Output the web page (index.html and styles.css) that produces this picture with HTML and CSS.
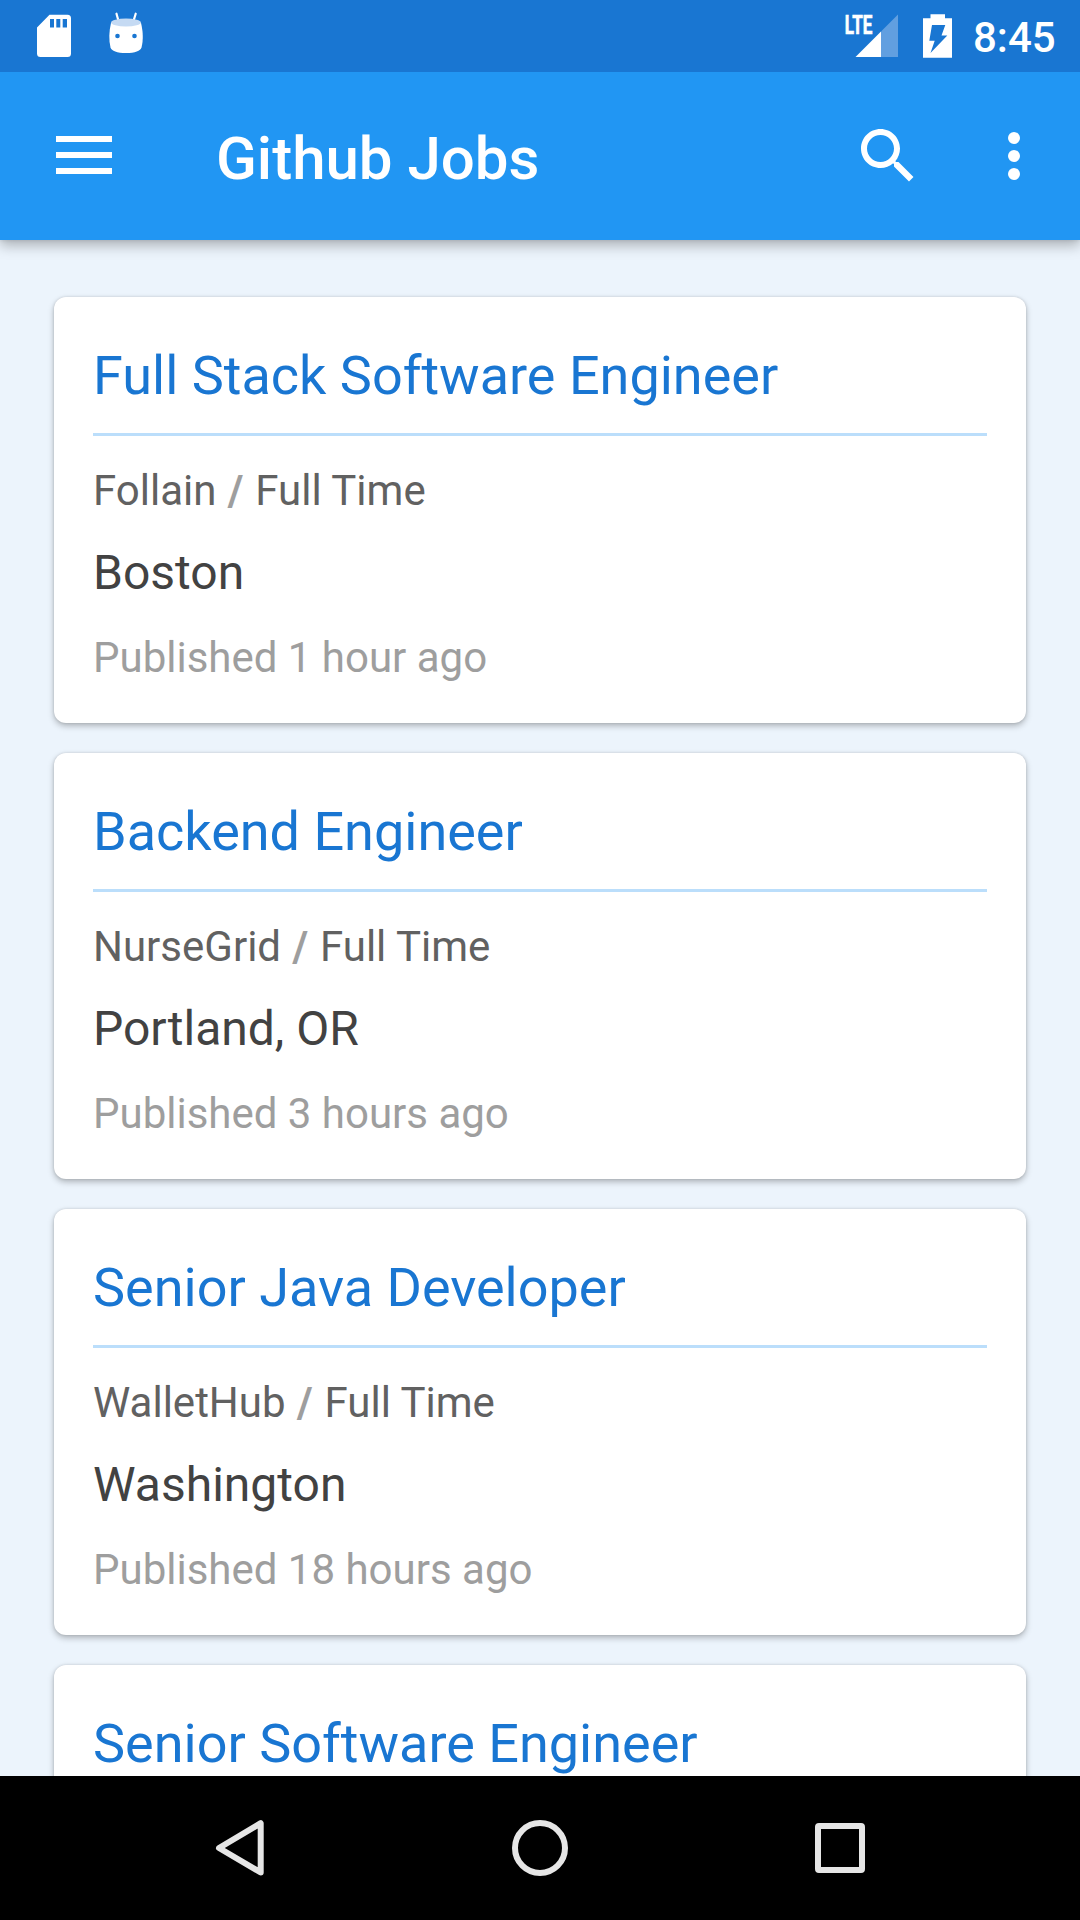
FILE: index.html
```html
<!DOCTYPE html>
<html lang="en">
<head>
<meta charset="utf-8">
<title>Github Jobs</title>
<link rel="stylesheet" href="styles.css">
</head>
<body>
<div class="screen">
  <div class="status-bar">
    <svg class="status-left" width="160" height="72" viewBox="0 0 160 72" aria-hidden="true">
      <path fill="#fff" fill-rule="evenodd" d="M49.500 14.700H67.500Q71 14.700 71 18.200V53.500Q71 57 67.500 57H40.500Q37 57 37 53.500V27.500ZM50 19V27.500H54V19ZM56.300 19V27.500H60.300V19ZM62.700 19V27.500H67V19Z"/>
      <path fill="none" stroke="#fff" stroke-width="2.200" stroke-linecap="round" d="M116.500 13.700L118.500 21M135.700 13.700L133.500 21"/>
      <path fill="#fff" d="M111 23C109 31 108.700 40 110.500 47.500C111.500 51 117 53 126 53S140.500 51 141.500 47.500C143.500 40 143 31 141 23Z"/>
      <ellipse cx="126" cy="22.500" rx="15" ry="4" fill="#c5daf3"/>
      <circle cx="117.500" cy="36" r="2.300" fill="#1976d2"/>
      <circle cx="134.500" cy="36" r="2.300" fill="#1976d2"/>
    </svg>
    <div class="status-right">
      <svg width="116" height="72" viewBox="840 0 116 72" aria-hidden="true">
        <path fill="#619fe0" d="M898 14.500V57H881V31.500Z"/>
        <path fill="#fff" d="M855.500 57L881 31.500V57Z"/>
        <text class="lte" x="844.800" y="33.500" textLength="27.500" lengthAdjust="spacingAndGlyphs">LTE</text>
        <path fill="#fff" fill-rule="evenodd" d="M930.500 14.300H945V18.300H952V57.700H923V18.300H930.500ZM932 25L929.300 40.700H934.700L930.500 53L947.300 35.500H941.500L945.300 25Z"/>
      </svg>
      <span class="clock">8:45</span>
    </div>
  </div>

  <header class="app-bar">
    <svg class="menu-icon" width="56" height="38" viewBox="0 0 56 38" aria-label="Menu"><path fill="#fff" d="M0 0H56V6H0ZM0 16H56V22H0ZM0 32H56V38H0Z"/></svg>
    <h1 class="app-title">Github Jobs</h1>
    <svg class="search-icon" width="72" height="72" viewBox="0 0 24 24" aria-label="Search"><path fill="#fff" d="M15.500 14h-.79l-.28-.27C15.410 12.590 16 11.110 16 9.500 16 5.910 13.090 3 9.500 3S3 5.910 3 9.500 5.910 16 9.500 16c1.610 0 3.090-.59 4.230-1.570l.27.28v.79l5 4.990L20.490 19l-4.990-5zm-6 0C7.010 14 5 11.990 5 9.500S7.010 5 9.500 5 14 7.010 14 9.500 11.990 14 9.500 14z"/></svg>
    <svg class="more-icon" width="72" height="72" viewBox="0 0 24 24" aria-label="More"><g fill="#fff"><circle cx="12" cy="6" r="2"/><circle cx="12" cy="12" r="2"/><circle cx="12" cy="18" r="2"/></g></svg>
  </header>

  <main class="job-list">
    <article class="card">
      <h2 class="job-title">Full Stack Software Engineer</h2>
      <p class="meta">Follain <span class="slash">/</span> Full Time</p>
      <p class="city">Boston</p>
      <p class="published">Published 1 hour ago</p>
    </article>
    <article class="card">
      <h2 class="job-title">Backend Engineer</h2>
      <p class="meta">NurseGrid <span class="slash">/</span> Full Time</p>
      <p class="city">Portland, OR</p>
      <p class="published">Published 3 hours ago</p>
    </article>
    <article class="card">
      <h2 class="job-title">Senior Java Developer</h2>
      <p class="meta">WalletHub <span class="slash">/</span> Full Time</p>
      <p class="city">Washington</p>
      <p class="published">Published 18 hours ago</p>
    </article>
    <article class="card">
      <h2 class="job-title">Senior Software Engineer</h2>
    </article>
  </main>

  <nav class="nav-bar">
    <svg width="56" height="64" viewBox="0 0 56 64" aria-label="Back"><path fill="none" stroke="#e6e6e6" stroke-width="6" stroke-linejoin="round" d="M48.700 7.200V56.500L7 32Z"/></svg>
    <svg width="56" height="64" viewBox="0 0 56 64" aria-label="Home"><circle cx="28" cy="32" r="25" fill="none" stroke="#e6e6e6" stroke-width="6"/></svg>
    <svg width="56" height="64" viewBox="0 0 56 64" aria-label="Recents"><rect x="6" y="10" width="44" height="44" rx="1" fill="none" stroke="#e6e6e6" stroke-width="6"/></svg>
  </nav>
</div>
</body>
</html>
```
FILE: styles.css
```css
* { box-sizing: border-box; }

body {
  margin: 0;
  font-family: Roboto, "Noto Sans", sans-serif;
}

h1, h2, p { margin: 0; font-weight: 400; white-space: nowrap; }
svg { display: block; flex: none; }

.screen {
  display: flex;
  flex-direction: column;
  width: 1080px;
  height: 1920px;
  overflow: hidden;
  background: #ecf4fc;
}

.status-bar {
  display: flex;
  justify-content: space-between;
  flex: none;
  z-index: 2;
  height: 72px;
  padding-right: 24px;
  background: #1976d2;
  color: #fff;
}

.status-right { display: flex; gap: 17px; }

.lte {
  font: 700 26px Roboto, sans-serif;
  fill: #fff;
  stroke: #fff;
  stroke-width: .7px;
}

.clock {
  width: 83px;
  font-size: 42px;
  font-weight: 500;
  line-height: 76px;
}

.app-bar {
  display: flex;
  align-items: center;
  flex: none;
  z-index: 1;
  height: 168px;
  padding: 0 30px 0 56px;
  background: #2196f3;
  box-shadow: 0 6px 12px rgba(0, 0, 0, .26), 0 0 4px rgba(0, 0, 0, .12);
}

.menu-icon { margin-bottom: 2px; }

.app-title {
  flex: 1;
  margin-left: 104px;
  padding-top: 6px;
  color: #fff;
  font-size: 60px;
  font-weight: 500;
  line-height: 72px;
}

.more-icon { margin-left: 54px; }

.job-list {
  display: flex;
  flex: 1;
  flex-direction: column;
  gap: 30px;
  min-height: 0;
  padding: 57px 54px 0;
  overflow: hidden;
}

.card {
  flex: none;
  height: 426px;
  padding: 47px 39px 0;
  border-radius: 12px;
  background: #fff;
  box-shadow: 0 3px 6px rgba(0, 0, 0, .26), 0 0 3px rgba(0, 0, 0, .13);
}

.job-title {
  height: 92px;
  border-bottom: 3px solid #bbdefb;
  color: #1976d2;
  font-size: 54px;
  line-height: 64px;
}

.meta {
  margin-top: 30px;
  color: #616161;
  font-size: 42px;
  line-height: 50px;
}

.slash {
  padding: 0 1.5px 0 1px;
  color: #9e9e9e;
  font-weight: 700;
}

.city {
  margin-top: 29px;
  color: #424242;
  font-size: 48px;
  line-height: 56px;
}

.published {
  margin-top: 32px;
  color: #9e9e9e;
  font-size: 42px;
  line-height: 50px;
}

.nav-bar {
  display: flex;
  align-items: center;
  justify-content: center;
  flex: none;
  gap: 244px;
  height: 144px;
  background: #000;
}
```
